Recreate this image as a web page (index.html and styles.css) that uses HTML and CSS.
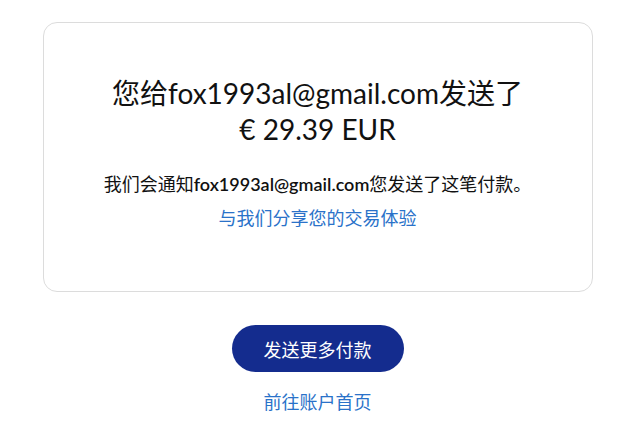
FILE: index.html
```html
<!DOCTYPE html>
<html lang="zh-CN">
<head>
  <meta charset="UTF-8">
  <meta name="viewport" content="width=device-width, initial-scale=1.0">
  <title>付款已发送</title>
  <link rel="stylesheet" href="styles.css">
</head>
<body>
  <div class="page">
    <div class="card">
      <h1 class="title">您给fox1993al@gmail.com发送了<br>€ 29.39 EUR</h1>
      <p class="note">我们会通知<strong>fox1993al@gmail.com</strong>您发送了这笔付款。</p>
      <a class="link" href="#">与我们分享您的交易体验</a>
    </div>
    <div class="actions">
      <button class="button">发送更多付款</button>
      <a class="link" href="#">前往账户首页</a>
    </div>
  </div>
</body>
</html>
```

FILE: styles.css
```css
body {
  margin: 0;
  background-color: #ffffff;
  font-family: Lato, "Noto Sans CJK SC", sans-serif;
  color: #111111;
}

.page {
  width: 550px;
  margin: 0 auto;
  padding-top: 22px;
}

.card {
  border: 1px solid #dcdcdc;
  border-radius: 14px;
  height: 270px;
  box-sizing: border-box;
  padding-top: 52px;
  display: flex;
  flex-direction: column;
  align-items: center;
  text-align: center;
}

.title {
  margin: 0;
  font-size: 28px;
  font-weight: 400;
  line-height: 36px;
}

.note {
  margin: 25px 0 10px;
  font-size: 18px;
  line-height: 24px;
}

.note strong {
  font-weight: 600;
}

.link {
  color: #2a72c9;
  text-decoration: none;
  font-size: 18px;
  line-height: 24px;
}

.actions {
  margin-top: 33px;
  display: flex;
  flex-direction: column;
  align-items: center;
  gap: 18px;
}

.button {
  width: 172px;
  height: 47px;
  border: none;
  border-radius: 24px;
  background-color: #142c8e;
  color: #ffffff;
  font-family: inherit;
  font-size: 18px;
  cursor: pointer;
}
```
